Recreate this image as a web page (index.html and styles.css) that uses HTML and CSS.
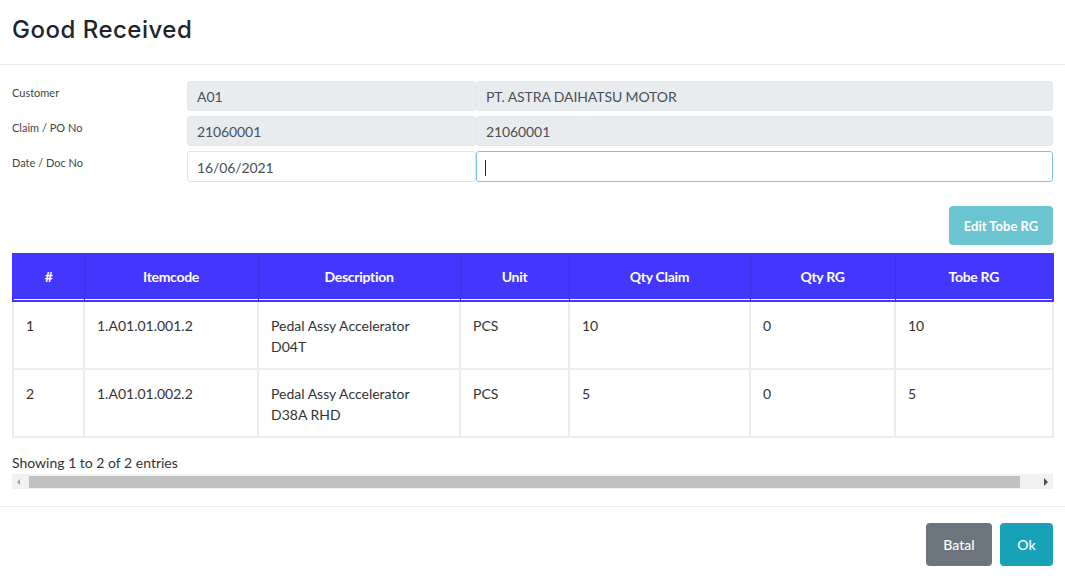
FILE: index.html
```html
<!DOCTYPE html>
<html>
<head>
<meta charset="utf-8">
<link rel="stylesheet" href="styles.css">
</head>
<body>
<div class="modal">
  <div class="modal-header">
    <h1 class="title">Good Received</h1>
  </div>
  <div class="modal-body">
    <div class="form">
      <div class="form-row">
        <div class="label">Customer</div>
        <div class="field short readonly">A01</div>
        <div class="field long readonly">PT. ASTRA DAIHATSU MOTOR</div>
      </div>
      <div class="form-row">
        <div class="label">Claim / PO No</div>
        <div class="field short readonly">21060001</div>
        <div class="field long readonly">21060001</div>
      </div>
      <div class="form-row">
        <div class="label">Date / Doc No</div>
        <div class="field short tall">16/06/2021</div>
        <div class="field long tall focus"><span class="caret"></span></div>
      </div>
    </div>
    <div class="actions">
      <button class="btn btn-info-light">Edit Tobe RG</button>
    </div>
    <table class="grid">
      <colgroup>
        <col style="width:71px"><col style="width:174px"><col style="width:202px"><col style="width:109px"><col style="width:181px"><col style="width:145px"><col style="width:158px">
      </colgroup>
      <thead>
        <tr><th>#</th><th>Itemcode</th><th>Description</th><th>Unit</th><th>Qty Claim</th><th>Qty RG</th><th>Tobe RG</th></tr>
      </thead>
      <tbody>
        <tr><td>1</td><td>1.A01.01.001.2</td><td>Pedal Assy Accelerator<br>D04T</td><td>PCS</td><td>10</td><td>0</td><td>10</td></tr>
        <tr><td>2</td><td>1.A01.01.002.2</td><td>Pedal Assy Accelerator<br>D38A RHD</td><td>PCS</td><td>5</td><td>0</td><td>5</td></tr>
      </tbody>
    </table>
    <div class="info">Showing 1 to 2 of 2 entries</div>
    <div class="scrollbar">
      <span class="arrow-left"></span>
      <div class="thumb"></div>
      <span class="arrow-right"></span>
    </div>
  </div>
  <div class="modal-footer">
    <button class="btn btn-secondary">Batal</button>
    <button class="btn btn-info">Ok</button>
  </div>
</div>
</body>
</html>
```
FILE: styles.css
```css
* { box-sizing: border-box; }
html, body { margin: 0; padding: 0; background: #fff; }
body { font-family: Lato, "Open Sans", sans-serif; color: #212529; width: 1065px; }

.modal-header {
  height: 65px;
  border-bottom: 1px solid #e9ecef;
  padding: 15px 12px 0;
}
.title {
  margin: 0;
  font-family: Inter, "Open Sans", sans-serif;
  font-weight: 500;
  font-size: 24px;
  line-height: 30px;
  color: #212529;
  letter-spacing: 0.5px;
}

.modal-body { padding: 16px 12px 0; }

.form { display: flex; flex-direction: column; gap: 5px; }
.form-row { display: flex; align-items: flex-start; }
.label {
  width: 175px;
  font-size: 11px;
  color: #444;
  padding-top: 5px;
}
.field {
  height: 30px;
  border: 1px solid #dfe3e7;
  border-radius: 3px;
  font-size: 14px;
  line-height: 28px;
  padding: 1px 9px 0;
  color: #495057;
  background: #fff;
  letter-spacing: -0.1px;
}
.field.tall { height: 31px; padding-top: 2px; }
.field.short { width: 289px; }
.field.long { width: 577px; }
.readonly { background: #e9ecef; border-color: #e4e7ea; }
.focus { border-color: #80bdff; position: relative; }
.caret {
  display: inline-block;
  width: 1px;
  height: 16px;
  background: #222;
  vertical-align: middle;
  margin-left: -1px;
  margin-top: -2px;
}

.actions { display: flex; justify-content: flex-end; margin-top: 24px; margin-bottom: 8px; }
.btn {
  border: none;
  border-radius: 4px;
  color: #fff;
  font-family: Lato, sans-serif;
  font-weight: 700;
  cursor: pointer;
}
.btn-info-light {
  background: #6bc5d0;
  height: 39px;
  width: 104px;
  font-size: 13px;
  padding: 0;
}

.grid {
  width: 1041px;
  border-collapse: collapse;
  table-layout: fixed;
  font-size: 14px;
}
.grid th {
  background: #4337fe;
  color: #fff;
  font-weight: 700;
  font-size: 14px;
  height: 48px;
  padding: 12px 12px;
  line-height: 21px;
  text-align: center;
  letter-spacing: -0.3px;
  border-left: 1px solid #3b30e6;
  border-right: 1px solid #3b30e6;
  border-bottom: 2px solid #4337fe;
  box-shadow: inset 0 -1px 0 #fff;
}
.grid th:first-child { border-left: 2px solid #4337fe; }
.grid th:last-child { border-right: 2px solid #4337fe; }
.grid td {
  border: 2px solid #eaecee;
  padding: 13px 12px 11px 12px;
  line-height: 21px;
  height: 68px;
  vertical-align: top;
  color: #333;
}

.info { font-size: 14px; color: #333; margin-top: 16px; line-height: 18px; }
.scrollbar {
  margin-top: 2px;
  height: 15px;
  background: #f1f1f1;
  display: flex;
  align-items: center;
  width: 1041px;
}
.arrow-left {
  width: 0; height: 0;
  border-top: 3px solid transparent;
  border-bottom: 3px solid transparent;
  border-right: 3px solid #a3a3a3;
  margin-left: 5px;
  margin-right: 9px;
}
.thumb {
  flex: 1;
  height: 12px;
  background: #c1c1c1;
}
.arrow-right {
  width: 0; height: 0;
  border-top: 4px solid transparent;
  border-bottom: 4px solid transparent;
  border-left: 4px solid #505050;
  margin-left: 24px;
  margin-right: 5px;
}

.modal-footer {
  margin-top: 17px;
  border-top: 1px solid #e9ecef;
  padding: 16px 12px 0;
  display: flex;
  justify-content: flex-end;
  gap: 8px;
}
.btn-secondary { background: #6c757d; width: 66px; height: 43px; font-size: 14px; font-weight: 500; }
.btn-info { background: #17a2b8; width: 53px; height: 43px; font-size: 14px; font-weight: 500; }
```
